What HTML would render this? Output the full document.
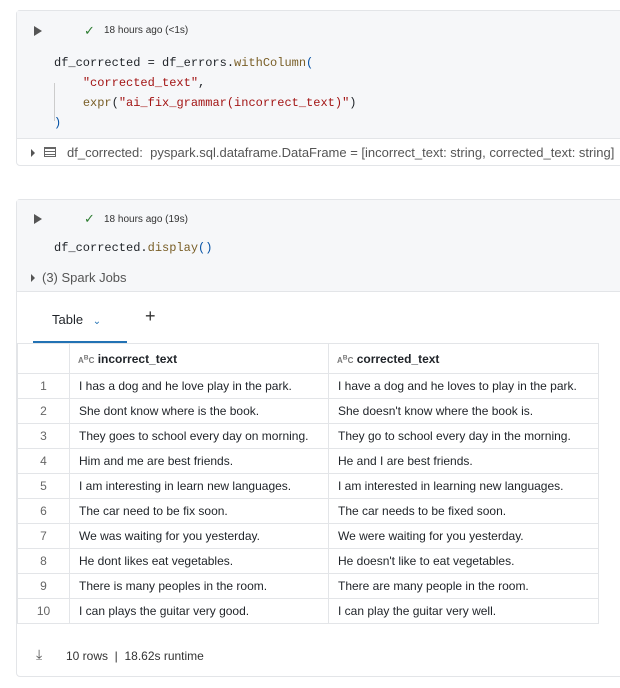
<!DOCTYPE html>
<html><head><style>
body{margin:0;width:620px;height:688px;background:#fff;font-family:"Liberation Sans",sans-serif;position:relative;overflow:hidden;color:#1f2328}
.cell{position:absolute;left:16px;width:620px;border:1px solid #e3e5e8;border-radius:4px;background:#fff}
.gray{background:#f6f7f9}
.abs{position:absolute}
.code{font-family:"Liberation Mono",monospace;font-size:12px;color:#1f2328;white-space:pre}
.s{color:#a31515}.f{color:#795e26}.p{color:#0451a5}
.meta{font-size:10px;color:#333}
table{border-collapse:collapse;font-size:12px;position:absolute;left:0;top:143px;table-layout:fixed;width:581px}
td{border:1px solid #e3e5e8;height:24px;padding:0 9px;white-space:nowrap;overflow:hidden}
td.i{text-align:center;color:#666;padding:0}
th{border:1px solid #e3e5e8;height:29px;text-align:left;padding:0 8px;font-weight:bold;font-size:12px}
</style></head><body>
<div class="cell" style="top:10px;height:154px">
 <div class="gray abs" style="left:0;top:0;width:620px;height:127px;border-bottom:1px solid #e3e5e8"></div>
 <div class="abs" style="left:17px;top:15px;width:0;height:0;border-left:8px solid #555;border-top:5px solid transparent;border-bottom:5px solid transparent"></div>
 <div class="abs" style="left:67px;top:12px;color:#2e7d32;font-size:13px">✓</div>
 <div class="abs meta" style="left:87px;top:14px">18 hours ago (&lt;1s)</div>
 <div class="abs" style="left:37px;top:72px;width:1px;height:38px;background:#ccc"></div>
 <div class="abs code" style="left:37px;top:42px;line-height:20px">df_corrected = df_errors.<span class="f">withColumn</span><span class="p">(</span>
    <span class="s">"corrected_text"</span>,
    <span class="f">expr</span>(<span class="s">"ai_fix_grammar(incorrect_text)"</span>)
<span class="p">)</span></div>
 <div class="abs" style="left:14px;top:138px;width:0;height:0;border-left:4px solid #555;border-top:4px solid transparent;border-bottom:4px solid transparent"></div>
 <div class="abs" style="left:27px;top:136px;width:12px;height:10px;border:1px solid #666;box-sizing:border-box;background:repeating-linear-gradient(#666 0 1px,transparent 1px 3px)"></div>
 <div class="abs" style="left:50px;top:134px;font-size:13px;color:#555">df_corrected:&nbsp; pyspark.sql.dataframe.DataFrame = [incorrect_text: string, corrected_text: string]</div>
</div>
<div class="cell" style="top:199px;height:476px">
 <div class="gray abs" style="left:0;top:0;width:620px;height:91px;border-bottom:1px solid #e3e5e8"></div>
 <div class="abs" style="left:17px;top:14px;width:0;height:0;border-left:8px solid #555;border-top:5px solid transparent;border-bottom:5px solid transparent"></div>
 <div class="abs" style="left:67px;top:11px;color:#2e7d32;font-size:13px">✓</div>
 <div class="abs meta" style="left:87px;top:14px">18 hours ago (19s)</div>
 <div class="abs code" style="left:37px;top:41px">df_corrected.<span class="f">display</span><span class="p">()</span></div>
 <div class="abs" style="left:14px;top:74px;width:0;height:0;border-left:4px solid #555;border-top:4px solid transparent;border-bottom:4px solid transparent"></div>
 <div class="abs" style="left:25px;top:70px;font-size:13px;color:#555">(3) Spark Jobs</div>
 <div class="abs" style="left:35px;top:112px;font-size:13px">Table <span style="color:#2272b4;font-size:10px;margin-left:6px">⌄</span></div>
 <div class="abs" style="left:128px;top:106px;font-size:18px;color:#333">+</div>
 <div class="abs" style="left:16px;top:141px;width:94px;height:3px;background:#2272b4"></div>
 <table>
  <colgroup><col style="width:52px"><col style="width:259px"><col style="width:270px"></colgroup>
  <tr><th style="padding:0"></th><th><span style="font-size:8px;color:#777">A<sup>B</sup>C</span> incorrect_text</th><th><span style="font-size:8px;color:#777">A<sup>B</sup>C</span> corrected_text</th></tr>
  <tr><td class="i">1</td><td>I has a dog and he love play in the park.</td><td>I have a dog and he loves to play in the park.</td></tr>
  <tr><td class="i">2</td><td>She dont know where is the book.</td><td>She doesn't know where the book is.</td></tr>
  <tr><td class="i">3</td><td>They goes to school every day on morning.</td><td>They go to school every day in the morning.</td></tr>
  <tr><td class="i">4</td><td>Him and me are best friends.</td><td>He and I are best friends.</td></tr>
  <tr><td class="i">5</td><td>I am interesting in learn new languages.</td><td>I am interested in learning new languages.</td></tr>
  <tr><td class="i">6</td><td>The car need to be fix soon.</td><td>The car needs to be fixed soon.</td></tr>
  <tr><td class="i">7</td><td>We was waiting for you yesterday.</td><td>We were waiting for you yesterday.</td></tr>
  <tr><td class="i">8</td><td>He dont likes eat vegetables.</td><td>He doesn't like to eat vegetables.</td></tr>
  <tr><td class="i">9</td><td>There is many peoples in the room.</td><td>There are many people in the room.</td></tr>
  <tr><td class="i">10</td><td>I can plays the guitar very good.</td><td>I can play the guitar very well.</td></tr>
 </table>
 <div class="abs" style="left:19px;top:447px;font-size:14px;color:#555;line-height:14px">⤓</div>
 <div class="abs" style="left:49px;top:449px;font-size:12px;color:#333">10 rows &nbsp;|&nbsp; 18.62s runtime</div>
</div>
</body></html>
